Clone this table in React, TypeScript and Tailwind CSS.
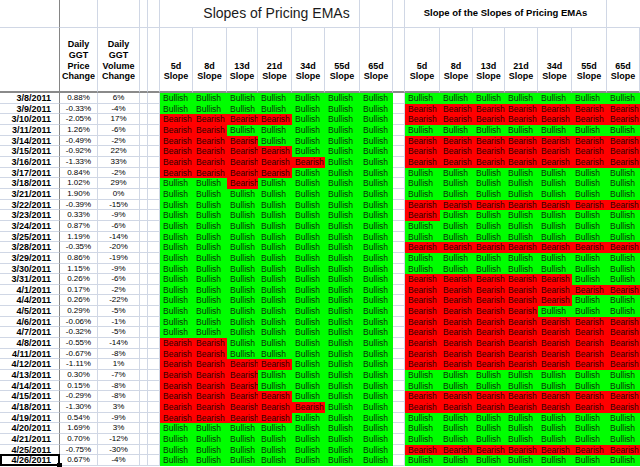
import React from "react";

const rows: [string, string, string, string, string][] = [
  ["3/8/2011", "0.88%", "6%", "GGGGGGG", "GGGGGGG"],
  ["3/9/2011", "-0.33%", "-4%", "GGGGGGG", "RRRRRRR"],
  ["3/10/2011", "-2.05%", "17%", "RRRRGGG", "RRRRRRR"],
  ["3/11/2011", "1.26%", "-6%", "RRGGGGG", "GGGGGGG"],
  ["3/14/2011", "-0.49%", "-2%", "RRRGGGG", "RRRRRRR"],
  ["3/15/2011", "-0.92%", "22%", "RRRRGGG", "RRRRRRR"],
  ["3/16/2011", "-1.33%", "33%", "RRRRRGG", "RRRRRRR"],
  ["3/17/2011", "0.84%", "-2%", "RRRRGGG", "GGGGGGG"],
  ["3/18/2011", "1.02%", "29%", "GGRGGGG", "GGGGGGG"],
  ["3/21/2011", "1.90%", "0%", "GGGGGGG", "GGGGGGG"],
  ["3/22/2011", "-0.39%", "-15%", "GGGGGGG", "RRRRRRR"],
  ["3/23/2011", "0.33%", "-9%", "GGGGGGG", "RGGGGGG"],
  ["3/24/2011", "0.87%", "-6%", "GGGGGGG", "GGGGGGG"],
  ["3/25/2011", "1.19%", "-14%", "GGGGGGG", "GGGGGGG"],
  ["3/28/2011", "-0.35%", "-20%", "GGGGGGG", "RRRRRRR"],
  ["3/29/2011", "0.86%", "-19%", "GGGGGGG", "GGGGGGG"],
  ["3/30/2011", "1.15%", "-9%", "GGGGGGG", "GGGGGGG"],
  ["3/31/2011", "0.26%", "-6%", "GGGGGGG", "RRRRRGG"],
  ["4/1/2011", "0.17%", "-2%", "GGGGGGG", "RRRRRRR"],
  ["4/4/2011", "0.26%", "-22%", "GGGGGGG", "RRRRRGG"],
  ["4/5/2011", "0.29%", "-5%", "GGGGGGG", "RRRRGGG"],
  ["4/6/2011", "-0.06%", "-1%", "GGGGGGG", "RRRRRRR"],
  ["4/7/2011", "-0.32%", "-5%", "GGGGGGG", "RRRRRRR"],
  ["4/8/2011", "-0.55%", "-14%", "RRGGGGG", "RRRRRRR"],
  ["4/11/2011", "-0.67%", "-8%", "RRGGGGG", "RRRRRRR"],
  ["4/12/2011", "-1.11%", "1%", "RRRRGGG", "RRRRRRR"],
  ["4/13/2011", "0.30%", "-7%", "RRRGGGG", "GGGGGGG"],
  ["4/14/2011", "0.15%", "-8%", "RRRGGGG", "GGGGGGG"],
  ["4/15/2011", "-0.29%", "-8%", "RRRRGGG", "RRRRRRR"],
  ["4/18/2011", "-1.30%", "3%", "RRRRRGG", "RRRRRRR"],
  ["4/19/2011", "0.54%", "-9%", "RRRRGGG", "GGGGGGG"],
  ["4/20/2011", "1.69%", "3%", "GGGGGGG", "GGGGGGG"],
  ["4/21/2011", "0.70%", "-12%", "GGGGGGG", "GGGGGGG"],
  ["4/25/2011", "-0.75%", "-30%", "GGGGGGG", "RRRRRRR"],
  ["4/26/2011", "0.67%", "-4%", "GGGGGGG", "GGGGGGG"],
];

const periods = ["5d", "8d", "13d", "21d", "34d", "55d", "65d"];

const grid = "border-r border-b border-[#d0d7e5]";
const dark = "border-r border-b border-r-[#858585] border-b-[#d0d7e5]";

function Signal({ c }: { c: string }) {
  const bull = c === "G";
  return (
    <div
      className={`h-[10.66px] overflow-hidden whitespace-nowrap pl-[3px] text-[8.5px] leading-[10.66px] ${
        bull ? "bg-[#00ff00] text-[#0a300a]" : "bg-[#ff0000] text-[#330000]"
      }`}
    >
      {bull ? "Bullish" : "Bearish"}
    </div>
  );
}

function HeadLabel({ lines }: { lines: string[] }) {
  return (
    <div className={`${grid} flex h-[65px] items-end justify-center pb-[9px] text-center text-[9px] font-bold leading-[10.7px] text-black`}>
      <div>
        {lines.map((l) => (
          <div key={l}>{l}</div>
        ))}
      </div>
    </div>
  );
}

export default function App() {
  return (
    <div
      className="h-[467px] w-[640px] overflow-hidden bg-white text-black"
      style={{ fontFamily: '"Liberation Sans", Arial, sans-serif' }}
    >
      <div className="grid grid-cols-[60px_38px_42px_8px_12px_33px_34px_31px_34px_33px_35px_33px_12px_35px_33px_32px_33px_34px_35px_33px]">
        {/* header row 1 */}
        <div className={`${dark} h-[28px]`} />
        <div className={`${grid} h-[28px]`} />
        <div className={`${grid} h-[28px]`} />
        <div className={`${grid} h-[28px]`} />
        <div className={`${grid} h-[28px]`} />
        <div className={`${grid} col-span-6 flex h-[28px] items-center justify-center whitespace-nowrap pl-[34px] text-[14px] text-[#1a1a1a]`}>
          Slopes of Pricing EMAs
        </div>
        <div className={`${grid} h-[28px]`} />
        <div className={`${grid} h-[28px]`} />
        <div className={`${grid} col-span-6 flex h-[28px] items-center justify-center whitespace-nowrap text-[9.5px] font-bold`}>
          Slope of the Slopes of Pricing EMAs
        </div>
        <div className="h-[28px] border-b border-[#d0d7e5]" />

        {/* header row 2 */}
        <div className="h-[65px] border-r border-b-2 border-r-[#858585] border-b-[#8a8a8a]" />
        {[
          ["Daily", "GGT", "Price", "Change"],
          ["Daily", "GGT", "Volume", "Change"],
        ].map((l, i) => (
          <div key={i} className="h-[65px] border-r border-b-2 border-r-[#d0d7e5] border-b-[#8a8a8a] flex items-end justify-center pb-[9px] text-center text-[9px] font-bold leading-[10.7px]">
            <div>
              {l.map((x) => (
                <div key={x}>{x}</div>
              ))}
            </div>
          </div>
        ))}
        <div className="h-[65px] border-r border-b-2 border-r-[#d0d7e5] border-b-[#8a8a8a]" />
        <div className="h-[65px] border-r border-b-2 border-r-[#d0d7e5] border-b-[#8a8a8a]" />
        {periods.map((p) => (
          <div key={"a" + p} className="h-[65px] border-r border-b-2 border-r-[#d0d7e5] border-b-[#8a8a8a] flex items-end justify-center pb-[9px] text-center text-[9px] font-bold leading-[10.7px]">
            <div>
              <div>{p}</div>
              <div>Slope</div>
            </div>
          </div>
        ))}
        <div className="h-[65px] border-r border-b-2 border-r-[#d0d7e5] border-b-[#8a8a8a]" />
        {periods.map((p) => (
          <div key={"b" + p} className="h-[65px] border-r border-b-2 border-r-[#d0d7e5] border-b-[#8a8a8a] flex items-end justify-center pb-[9px] text-center text-[9px] font-bold leading-[10.7px]">
            <div>
              <div>{p}</div>
              <div>Slope</div>
            </div>
          </div>
        ))}

        {/* data rows */}
        {rows.map(([d, p, v, a, b], i) => (
          <React.Fragment key={d}>
            <div
              className={`${dark} relative h-[10.66px] whitespace-nowrap pr-[8px] text-right text-[9px] font-bold leading-[10px]`}
            >
              {d}
              {i === rows.length - 1 && (
                <>
                  <div className="absolute -top-[1px] -left-[0px] -right-[1px] -bottom-[1px] border-2 border-black" />
                  <div className="absolute -right-[3px] -bottom-[3px] h-[5px] w-[5px] bg-black" />
                </>
              )}
            </div>
            <div className={`${grid} h-[10.66px] whitespace-nowrap text-center text-[8px] leading-[10px]`}>{p}</div>
            <div className={`${grid} h-[10.66px] whitespace-nowrap text-center text-[8px] leading-[10px]`}>{v}</div>
            <div className={`${grid} h-[10.66px]`} />
            <div className={`${grid} h-[10.66px]`} />
            {a.split("").map((c, j) => (
              <Signal key={"a" + j} c={c} />
            ))}
            <div className={`${grid} h-[10.66px]`} />
            {b.split("").map((c, j) => (
              <Signal key={"b" + j} c={c} />
            ))}
          </React.Fragment>
        ))}
      </div>
    </div>
  );
}
